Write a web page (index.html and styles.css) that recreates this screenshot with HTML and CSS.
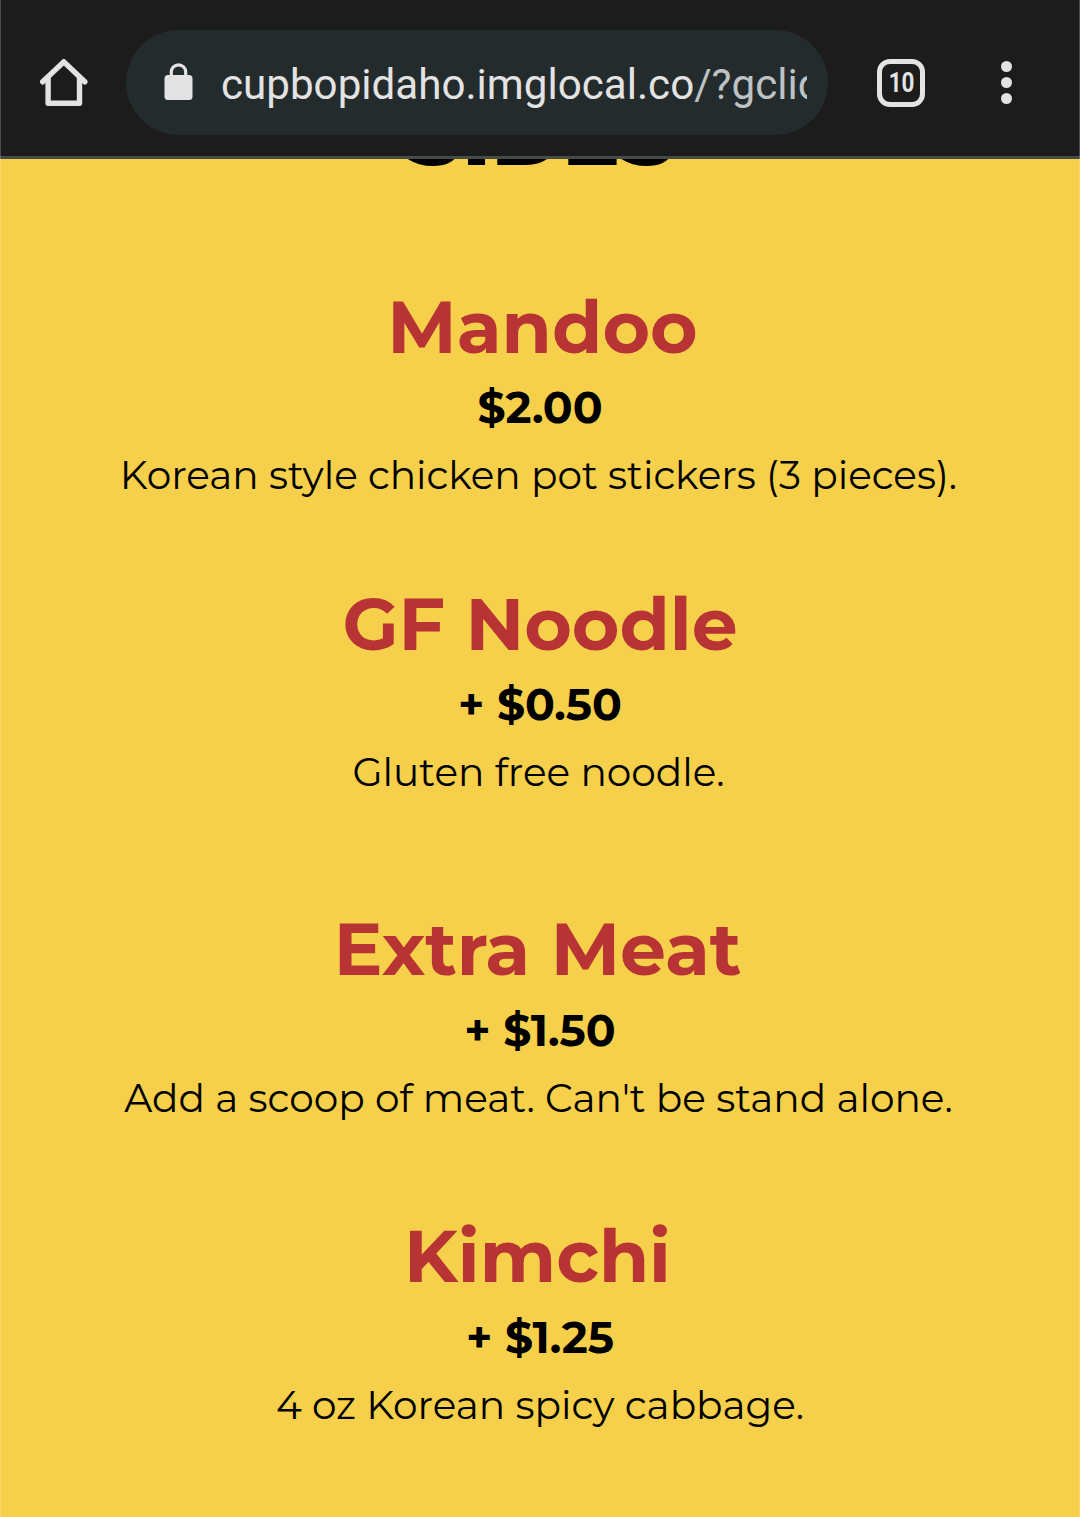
FILE: index.html
```
<!DOCTYPE html>
<html lang="en">
<head>
  <meta charset="UTF-8">
  <meta name="viewport" content="width=device-width, initial-scale=1.0">
  <title>Cupbop Idaho | Sides</title>
  <link rel="stylesheet" href="styles.css">
</head>

<body>
  <header class="browser-bar">
    <svg class="home-icon" width="48" height="48" viewBox="0 0 48 48" fill="none" stroke="#e3e3e3" stroke-width="5.4" stroke-linejoin="round" stroke-linecap="round">
      <path d="M2.7 22.8 L23.8 2.9 L44.8 22.8" stroke-linejoin="miter"/>
      <path d="M8.1 19 V44.2 H39.5 V19"/>
    </svg>
    <div class="address">
      <svg class="lock-icon" width="29" height="37" viewBox="0 0 29 37">
        <rect x="0.5" y="12" width="28" height="25" rx="3.5" fill="#e3e3e3"/>
        <path d="M7.3 14 V9 A7.2 7.2 0 0 1 21.7 9 V14" fill="none" stroke="#e3e3e3" stroke-width="3.2"/>
      </svg>
      <div class="url"><span class="host">cupbopidaho.imglocal.co</span>/?gclid</div>
    </div>
    <div class="tabs"><span>10</span></div>
    <div class="menu">
      <span class="dot"></span>
      <span class="dot"></span>
      <span class="dot"></span>
    </div>
  </header>

  <main class="sides">
    <div class="heading-clip"><h1>SIDES</h1></div>

    <section class="item mandoo">
      <h2>Mandoo</h2>
      <p class="price">$2.00</p>
      <p class="description">Korean style chicken pot stickers (3 pieces).</p>
    </section>

    <section class="item noodle">
      <h2>GF Noodle</h2>
      <p class="price">+ $0.50</p>
      <p class="description">Gluten free noodle.</p>
    </section>

    <section class="item meat">
      <h2>Extra Meat</h2>
      <p class="price">+ $1.50</p>
      <p class="description">Add a scoop of meat. Can't be stand alone.</p>
    </section>

    <section class="item kimchi">
      <h2>Kimchi</h2>
      <p class="price">+ $1.25</p>
      <p class="description">4 oz Korean spicy cabbage.</p>
    </section>
  </main>
</body>
</html>
```
FILE: styles.css
```
* {
  box-sizing: border-box;
  margin: 0;
  padding: 0;
}

body {
  background-color: #f6d04a;
  color: #000;
  font-family: 'Montserrat', 'Inter', sans-serif;
  height: 1517px;
  overflow: hidden;
}

/* faint line down both screen edges */
body::after {
  border: solid rgba(255, 255, 255, 0.22);
  border-width: 0 1px;
  content: '';
  pointer-events: none;
  position: fixed;
  inset: 0;
}

/* Browser bar */
.browser-bar {
  background-color: #1b1c1b;
  border-bottom: 3px solid #454b49;
  display: flex;
  align-items: center;
  height: 159px;
  padding: 9px 0 0 40px;
  font-family: 'Roboto', sans-serif;
}

.address {
  background-color: #232b2c;
  border-radius: 53px;
  display: flex;
  align-items: center;
  height: 105px;
  width: 702px;
  margin-left: 38px;
  padding: 0 21px 0 38px;
}

.lock-icon {
  margin-top: -3px;
}

.url {
  color: #bdc3c4;
  flex: 1;
  font-size: 42.15px;
  line-height: 60px;
  margin-left: 28px;
  padding-top: 5px;
  overflow: hidden;
  white-space: nowrap;
}

.host {
  color: #e3e3e3;
}

.tabs {
  border: 5px solid #e3e3e3;
  border-radius: 13px;
  color: #e3e3e3;
  font-size: 27px;
  font-weight: bold;
  line-height: 38px;
  text-align: center;
  height: 48px;
  width: 48px;
  margin-left: 49px;
}

.tabs span {
  display: inline-block;
  transform: scaleX(0.83);
}

.menu {
  display: flex;
  flex-direction: column;
  gap: 5px;
  margin-left: 76px;
}

.dot {
  background-color: #e3e3e3;
  border-radius: 50%;
  height: 11px;
  width: 11px;
}

/* Menu items */
.sides {
  text-align: center;
  white-space: nowrap;
}

/* the heading is scrolled under the browser bar */
.heading-clip {
  display: flex;
  align-items: flex-end;
  justify-content: center;
  height: 20px;
  margin-bottom: 108px;
  padding-left: 2px;
  overflow: hidden;
}

h1 {
  font-size: 86px;
  font-weight: 800;
  line-height: 88px;
}

h2 {
  color: #b83333;
  font-size: 72.7px;
  font-weight: 700;
  line-height: 80px;
}

.price {
  font-size: 44px;
  font-weight: 700;
  line-height: 80px;
}

.description {
  font-size: 39.05px;
  font-weight: 400;
  line-height: 57px;
  padding-right: 3px;
}

.mandoo {
  margin-bottom: 80px;
}

.mandoo h2 {
  padding-left: 5px;
}

.noodle {
  margin-bottom: 108px;
}

.meat {
  margin-bottom: 90px;
}

.meat h2,
.kimchi h2 {
  padding-right: 5px;
}

.meat .price,
.kimchi .price {
  line-height: 82px;
}

.meat .description {
  line-height: 55px;
}

.kimchi .description {
  line-height: 55px;
  padding-right: 0;
}
```
